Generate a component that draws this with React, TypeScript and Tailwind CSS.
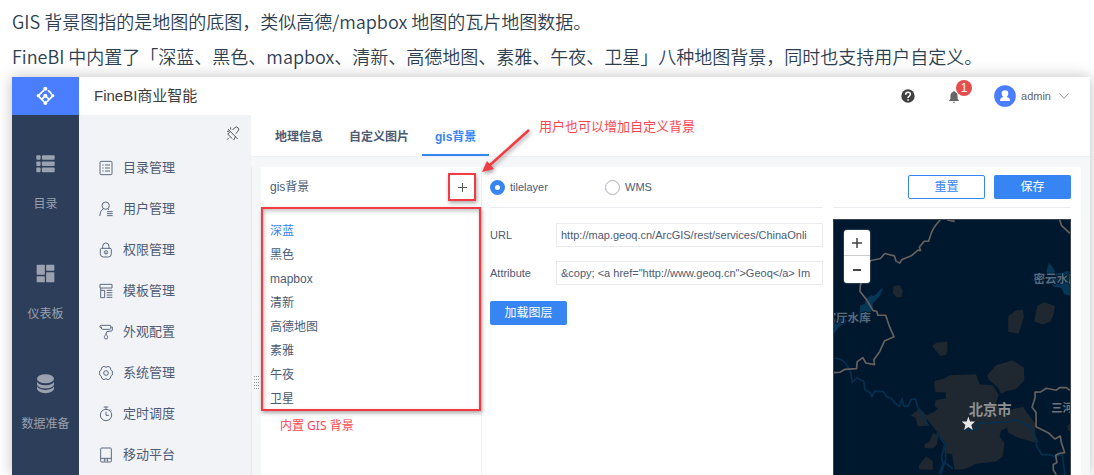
import { useState } from "react";
import type { ReactNode } from "react";

const sections = [
  {
    label: "目录",
    icon: (
      <g>
        <rect x="0" y="2" width="13" height="14" rx="3" />
        <rect x="17" y="2" width="39" height="14" rx="3" />
        <rect x="0" y="21" width="13" height="14" rx="3" />
        <rect x="17" y="21" width="39" height="14" rx="3" />
        <rect x="0" y="40" width="13" height="14" rx="3" />
        <rect x="17" y="40" width="39" height="14" rx="3" />
      </g>
    ),
  },
  {
    label: "仪表板",
    icon: (
      <g>
        <rect x="1" y="1" width="25" height="30" rx="2" />
        <rect x="30" y="1" width="25" height="18" rx="2" />
        <rect x="1" y="36" width="25" height="18" rx="2" />
        <rect x="30" y="24" width="25" height="30" rx="2" />
      </g>
    ),
  },
  {
    label: "数据准备",
    icon: (
      <g>
        <ellipse cx="28" cy="13" rx="26" ry="14" />
        <path d="M2 22 Q7 32 28 33 Q49 32 54 22 V31 Q49 42 28 43 Q7 42 2 31Z" />
        <path d="M2 36 Q7 46 28 47 Q49 46 54 36 V44 Q49 56 28 57 Q7 56 2 44Z" />
      </g>
    ),
  },
];

const menu: { label: string; icon: ReactNode }[] = [
  {
    label: "目录管理",
    icon: (
      <path d="M6 4H36Q39 4 39 7V41Q39 44 36 44H6Q3 44 3 41V7Q3 4 6 4ZM10 15h4M18 15h15M10 24h4M18 24h15M10 33h4M18 33h15" />
    ),
  },
  {
    label: "用户管理",
    icon: (
      <g>
        <circle cx="20" cy="14" r="11" />
        <path d="M13 23Q3 29 2 45M26 23L30 27M24 32H41M24 38H41M24 44H41" />
      </g>
    ),
  },
  {
    label: "权限管理",
    icon: (
      <g>
        <path d="M11 20V13Q11 3 20.500 3T30 13V20M4 23Q4 19 8 19H33Q37 19 37 23V35Q37 45 28 45H13Q4 45 4 35Z" />
        <circle cx="21" cy="31" r="5" />
        <path d="M21 31v5" />
      </g>
    ),
  },
  {
    label: "模板管理",
    icon: (
      <path d="M3 4H39V15H3ZM5 22H17V44H5ZM5 15V22M23 22H40M23 29H40M23 36H40M23 43H40" />
    ),
  },
  {
    label: "外观配置",
    icon: (
      <path d="M8 4H33Q35 4 35 7V13Q35 16 32 16H11Q7 16 7 12V8M7 10H3V6Q3 4 8 4M35 9H40V18Q40 21 36 21L23 23V28M21 28C21 33 16 35 16 40Q16 45 21 45T26 40C26 35 21 33 21 28" />
    ),
  },
  {
    label: "系统管理",
    icon: (
      <g>
        <path d="M15 4L21 7L27 4L34 8L35 14L40 18V30L35 34L34 40L27 44L21 41L15 44L8 40L7 34L2 30V18L7 14L8 8Z" />
        <circle cx="21" cy="24" r="7" />
      </g>
    ),
  },
  {
    label: "定时调度",
    icon: (
      <g>
        <circle cx="21" cy="27" r="17" />
        <path d="M14 3H28M21 3V10M33 10L37 14M21 17V28H30" />
      </g>
    ),
  },
  {
    label: "移动平台",
    icon: (
      <path d="M8 3H34Q37 3 37 6V42Q37 45 34 45H8Q5 45 5 42V6Q5 3 8 3ZM5 34H37M16 34V44M26 34V44M19 39H23" />
    ),
  },
];

const tabs = ["地理信息", "自定义图片", "gis背景"];

const layers = [
  "深蓝",
  "黑色",
  "mapbox",
  "清新",
  "高德地图",
  "素雅",
  "午夜",
  "卫星",
];

function TopBar() {
  return (
    <header className="flex h-[38px] shrink-0 items-center bg-white">
      <a
        href="#"
        aria-label="FineBI"
        className="flex h-full w-[67px] items-center justify-center bg-[#4a7dff]"
      >
        <svg width="20" height="20" viewBox="0 0 60 60" fill="white">
          <circle cx="28" cy="8" r="6" />
          <circle cx="7" cy="29" r="5" />
          <circle cx="50" cy="29" r="5" />
          <circle cx="28" cy="51" r="6" />
          <circle cx="28" cy="29" r="6" />
          <path
            d="M8 28L23 13M8 31L23 46M37 14L43 19Q46 22 46 24M49 31L34 46M28 29L20 37M28 29L37 38"
            fill="none"
            stroke="white"
            strokeWidth="5"
            strokeLinecap="round"
          />
        </svg>
      </a>
      <h1 className="pl-[15px] text-[15px] text-[#3d3d3d]">FineBI商业智能</h1>
      <div className="ml-auto flex items-center pr-5">
        <button aria-label="帮助" className="mr-[33px]">
          <svg width="14" height="14" viewBox="0 0 42 42">
            <circle cx="21" cy="21" r="20" fill="#404040" />
            <path
              d="M14 17Q14 10 21 10T28 16Q28 19 24 22Q21 24 21 27M21 31V35"
              fill="none"
              stroke="white"
              strokeWidth="4.500"
            />
          </svg>
        </button>
        <button aria-label="消息" className="relative mr-[34px]">
          <svg width="12" height="13" viewBox="0 0 36 40" fill="#666">
            <path d="M18 2Q20 2 20 5Q29 8 29 18V27L33 32V34H3V32L7 27V18Q7 8 16 5Q16 2 18 2ZM14 36H22Q21 39 18 39T14 36Z" />
          </svg>
          <span className="absolute -top-[10px] left-2 flex size-4 items-center justify-center rounded-full bg-[#e54d4f] text-[12px] leading-4 text-white">
            1
          </span>
        </button>
        <button className="flex items-center text-[11px] text-[#666]">
          <svg width="22" height="22" viewBox="0 0 66 66" className="mr-[5px]">
            <circle cx="33" cy="33" r="32.500" fill="#4a7dff" />
            <path
              d="M33 16Q43 16 43 26Q43 32 38 36Q48 38 48 47Q48 48 46 48H20Q18 48 18 47Q18 38 28 36Q23 32 23 26Q23 16 33 16Z"
              fill="white"
            />
          </svg>
          admin
          <svg width="12" height="8" viewBox="0 0 36 24" className="ml-[7px]">
            <path
              d="M4 4L18 19L32 4"
              fill="none"
              stroke="#999"
              strokeWidth="3"
            />
          </svg>
        </button>
      </div>
    </header>
  );
}

function SectionNav() {
  return (
    <nav className="flex w-[67px] shrink-0 flex-col bg-[#2d3e5a] pt-[39px]">
      {sections.map((section) => (
        <a
          key={section.label}
          href="#"
          className="flex h-[110px] shrink-0 flex-col items-center text-[12px] leading-5 text-[#98a1af]"
        >
          <svg
            width="19"
            height="20"
            viewBox="-1 0 58 58"
            fill="#9aa2af"
            className="mb-5"
          >
            {section.icon}
          </svg>
          {section.label}
        </a>
      ))}
    </nav>
  );
}

function SideMenu() {
  return (
    <aside className="w-[172px] shrink-0 bg-[#f2f3f7]">
      <div className="flex h-8 items-end justify-end pr-[11px]">
        <button aria-label="取消固定">
          <svg
            width="14"
            height="21"
            viewBox="0 0 42 63"
            fill="none"
            stroke="#555"
            strokeWidth="3"
          >
            <path d="M6 9L35 39M20 12L25 6Q31 0 36 5T36 16L29 23M13 17L5 24L19 38M23 42L29 31M14 4V11M3 16H9M9 35L3 41" />
          </svg>
        </button>
      </div>
      <ul>
        {menu.map((item) => (
          <li key={item.label}>
            <a
              href="#"
              className="flex h-[41px] items-center gap-[10px] pl-5 text-[13px] text-[#4d5b73]"
            >
              <svg
                width="14"
                height="16"
                viewBox="0 0 42 48"
                fill="none"
                stroke="#5c6a80"
                strokeWidth="3"
              >
                {item.icon}
              </svg>
              {item.label}
            </a>
          </li>
        ))}
      </ul>
    </aside>
  );
}

function LayerList() {
  const [current, setCurrent] = useState("深蓝");
  return (
    <section className="relative w-[221px] shrink-0 border-r border-[#eef0f3] bg-white text-[12px] text-[#4d5b73]">
      <div className="flex h-10 items-center justify-between pr-[5px] pl-[9px]">
        <h2>gis背景</h2>
        <button
          aria-label="增加"
          className="flex size-7 items-center justify-center border-2 border-[#f43b44] shadow-[1px_2px_4px_rgba(0,0,0,0.35)]"
        >
          <svg width="9" height="9" viewBox="0 0 9 9" stroke="#555">
            <path d="M0 4.500H9M4.500 0V9" />
          </svg>
        </button>
      </div>
      <ul className="border-2 border-[#f43b44] pt-[10px] shadow-[1px_2px_4px_rgba(0,0,0,0.35),inset_1px_2px_4px_rgba(0,0,0,0.25)]">
        {layers.map((layer) => (
          <li key={layer} className="h-6 last:h-[22px]">
            <button
              onClick={() => setCurrent(layer)}
              className={`block w-full pl-[7px] text-left leading-6 ${
                layer === current ? "text-[#3685f2]" : ""
              }`}
            >
              {layer}
            </button>
          </li>
        ))}
      </ul>
      <p className="pt-[5px] pl-[19px] font-['Noto_Sans','Noto_Sans_CJK_SC',sans-serif] text-[12px] leading-5 text-[#ff4650]">
        内置 GIS 背景
      </p>
      {/* note that points at the add button */}
      <svg
        width="56"
        height="52"
        viewBox="0 0 56 52"
        className="absolute -top-10 left-[217px] z-10 drop-shadow-[1px_2px_2px_rgba(0,0,0,0.4)]"
      >
        <path d="M51 3L12 38" stroke="#f43b44" strokeWidth="2.500" />
        <path d="M4 45L9 34L16 42Z" fill="#f43b44" />
      </svg>
      <p className="absolute -top-[50px] left-[278px] z-10 text-[13px] leading-5 whitespace-nowrap text-[#ff4650]">
        用户也可以增加自定义背景
      </p>
    </section>
  );
}

function MapPreview() {
  return (
    <div className="relative min-h-0 flex-1 overflow-hidden border border-[#3a4450] bg-[#00182d]">
      <svg
        viewBox="42 177 711 768"
        preserveAspectRatio="xMidYMin slice"
        className="block w-full"
      >
        <g fill="#1f2831">
          <path d="M222 376L240 374L249 390L246 408L232 411L219 397Z" />
          <path d="M567 467L590 450L612 448L614 470L598 520L567 514Z" />
          <path d="M655 436L675 425L708 436L703 463L694 483L672 492L645 483Z" />
          <path d="M338 557L352 546L383 544L384 570L379 584L362 587Z" />
          <path d="M504 645L530 615L580 600L614 622L616 660L590 686L560 694L545 701L536 682L508 658Z" />
          <path d="M344 675L345 662L375 655L390 645L470 642L480 672L520 675L538 704L530 730L560 760L585 746L612 740L625 760L648 790L650 848L600 834L568 818L563 803L545 812L541 830L556 850L550 890L530 905L470 912L440 927L405 930L398 883L380 880L378 850L350 812L320 774L318 766L345 755L355 745L346 738L348 720L380 714L378 696L348 696Z" />
          <path d="M274 766L300 745L320 764L325 796L295 799L288 774Z" />
          <path d="M314 854L330 845L340 820L356 826L352 854L338 866L316 864Z" />
          <path d="M297 917L320 890L340 905L340 930L300 928Z" />
          <path d="M753 790L745 798L748 812L753 814Z" />
        </g>
        <g fill="#073757">
          <path d="M191 379L180 406L159 428L158 445L148 459L119 462L121 434L135 430L137 419L152 404L163 405Z" />
          <path d="M42 475L75 472L80 485L56 500L42 520Z" />
          <path d="M690 305L704 324L710 338L748 331L753 336V405L735 400L728 382L705 378L690 360L682 332Z" />
        </g>
        <g fill="none" stroke="#06304f" strokeWidth="5">
          <path d="M44 593Q67 595 80 613L92 635L97 666L111 653L132 664L135 688L152 698L156 709L165 693L190 694L201 709L215 715L225 728L239 739L247 717L252 738L265 738L275 718L287 716L294 740L327 798M352 818L376 852L379 897L363 945M376 852L366 892L371 910L360 942M376 908L400 926" />
          <path d="M436 810L472 809L474 790L500 788L570 785L590 777L633 800L654 843L651 855L668 884L690 884L707 890L730 883L738 945" />
        </g>
        <g
          fill="none"
          stroke="#66615f"
          strokeWidth="5"
          strokeLinejoin="round"
        >
          <path d="M362 177Q340 200 334 220L327 241L314 241L299 259L303 269L295 268L275 285L247 296L240 307L229 301L224 285L195 278L182 293L151 300L135 340L122 371L120 392L140 417L160 450L171 452L174 464L198 464L203 480L210 500L223 529L194 542L180 573L162 598L164 613L138 608L129 592L112 604L110 625L75 627L60 636L42 637" />
          <path d="M722 177L728 194L753 217M383 177L406 181" />
          <path d="M753 690L742 682L722 682L712 690L682 684L665 695L648 696L648 713L639 741L651 757L651 800L690 820L708 837L724 828L727 847L737 878L722 880L710 886L714 908L703 914L703 930L712 945" />
        </g>
        <g
          fontSize="35"
          fontWeight="700"
          fill="#566a7e"
          stroke="#00182d"
          strokeWidth="5"
          paintOrder="stroke"
        >
          <text x="643" y="368">
            密云水库
          </text>
          <text x="13" y="485">
            官厅水库
          </text>
        </g>
        <g fontWeight="700" fill="#8f9092">
          <text x="448" y="764" fontSize="43">
            北京市
          </text>
          <text x="697" y="755" fontSize="34" fill="#6d7379">
            三河市
          </text>
        </g>
        <path
          d="M447 769L452 784L467 784L456 795L460 810L447 801L434 810L438 795L427 784L442 784Z"
          fill="#e6e8ea"
        />
      </svg>
      <div className="absolute top-[10px] left-[10px] flex w-[26px] flex-col rounded-[3px] bg-white text-[#444] shadow-[0_0_2px_rgba(255,255,255,0.5)]">
        <button
          aria-label="放大"
          className="flex h-[26px] items-center justify-center border-b border-[#ccc]"
        >
          <svg width="10" height="10" viewBox="0 0 10 10" stroke="#444">
            <path d="M0 5H10M5 0V10" strokeWidth="1.500" />
          </svg>
        </button>
        <button
          aria-label="缩小"
          className="flex h-[27px] items-center justify-center"
        >
          <svg width="8" height="2" viewBox="0 0 8 2" fill="#444">
            <path d="M0 0H8V2H0Z" />
          </svg>
        </button>
      </div>
    </div>
  );
}

function LayerForm() {
  const [type, setType] = useState("tilelayer");
  return (
    <section className="grid min-w-0 flex-1 grid-cols-[7fr_5fr] gap-[10px] bg-white pr-[10px] pl-2 text-[#4d5b73]">
      <form className="min-w-0 text-[11px]">
        <div className="flex h-[41px] items-center border-b border-[#e8eaed]">
          {["tilelayer", "WMS"].map((name) => (
            <label key={name} className="flex w-[115px] items-center gap-[5px]">
              <input
                type="radio"
                name="type"
                checked={type === name}
                onChange={() => setType(name)}
                className="size-[15px] appearance-none rounded-full border border-[#aab0ba] bg-white checked:border-[5px] checked:border-[#3685f2]"
              />
              {name}
            </label>
          ))}
        </div>
        <div className="mt-[15px] flex items-center">
          <label htmlFor="url" className="w-[66px] shrink-0">
            URL
          </label>
          <input
            id="url"
            defaultValue="http://map.geoq.cn/ArcGIS/rest/services/ChinaOnli"
            className="h-6 min-w-0 flex-1 border border-[#e8eaed] px-1"
          />
        </div>
        <div className="mt-[14px] flex items-center">
          <label htmlFor="attribute" className="w-[66px] shrink-0">
            Attribute
          </label>
          <input
            id="attribute"
            defaultValue={
              '&copy; <a href="http://www.geoq.cn">Geoq</a> Im'
            }
            className="h-6 min-w-0 flex-1 border border-[#e8eaed] px-1"
          />
        </div>
        <button
          type="button"
          className="mt-4 h-6 w-[77px] rounded-[2px] bg-[#3685f2] text-[12px] text-white"
        >
          加载图层
        </button>
      </form>
      <div className="flex min-w-0 flex-col">
        <div className="mb-[11px] flex h-[41px] shrink-0 items-center justify-end gap-[9px] border-b border-[#e8eaed] text-[12px]">
          <button className="h-6 w-[77px] rounded-[2px] border border-[#3685f2] text-[#3685f2]">
            重置
          </button>
          <button className="h-6 w-[77px] rounded-[2px] bg-[#3685f2] text-white">
            保存
          </button>
        </div>
        <MapPreview />
      </div>
    </section>
  );
}

function App() {
  return (
    <main className="flex h-screen flex-col overflow-hidden bg-white pr-1 pl-3 font-['Liberation_Sans','Noto_Sans_CJK_SC',sans-serif]">
      <div className="shrink-0 pt-1 pb-[3px] font-['Noto_Sans_CJK_SC',sans-serif] text-[18px] leading-[35px] font-[350] text-[#2c3e50]">
        <p>GIS 背景图指的是地图的底图，类似高德/mapbox 地图的瓦片地图数据。</p>
        <p>
          FineBI
          中内置了「深蓝、黑色、mapbox、清新、高德地图、素雅、午夜、卫星」八种地图背景，同时也支持用户自定义。
        </p>
      </div>
      <div className="flex min-h-0 flex-1 flex-col shadow-[0_0_14px_rgba(0,0,0,0.25)]">
        <TopBar />
        <div className="flex min-h-0 flex-1">
          <SectionNav />
          <SideMenu />
          <div className="flex min-w-0 flex-1 flex-col bg-[#f6f7f9]">
            <div className="flex h-[42px] shrink-0 border-b border-[#eef0f3] bg-white pl-[11px] text-[12px] font-bold text-[#4d5b73]">
              {tabs.map((tab) => (
                <button
                  key={tab}
                  className={`border-b-2 px-[13px] pt-1 ${
                    tab === "gis背景"
                      ? "border-[#3685f2] text-[#3685f2]"
                      : "border-transparent"
                  }`}
                >
                  {tab}
                </button>
              ))}
            </div>
            <div className="flex min-h-0 flex-1 pt-[10px] pr-[9px]">
              <div className="w-[10px] shrink-0 border-l border-[#e8eaed] pt-[209px] pl-[2px]">
                <svg width="6" height="13" viewBox="0 0 6 13" fill="#999">
                  <path d="M0 0h1v1h-1zM2 0h1v1h-1zM4 0h1v1h-1zM0 3h1v1h-1zM2 3h1v1h-1zM4 3h1v1h-1zM0 6h1v1h-1zM2 6h1v1h-1zM4 6h1v1h-1zM0 9h1v1h-1zM2 9h1v1h-1zM4 9h1v1h-1zM0 12h1v1h-1zM2 12h1v1h-1zM4 12h1v1h-1z" />
                </svg>
              </div>
              <LayerList />
              <LayerForm />
            </div>
          </div>
        </div>
      </div>
    </main>
  );
}

export default App;
